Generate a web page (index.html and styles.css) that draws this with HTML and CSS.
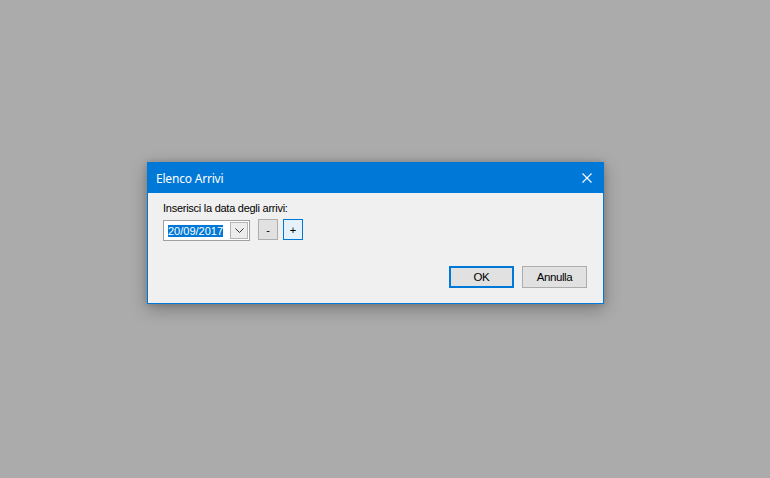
FILE: index.html
```html
<!DOCTYPE html>
<html lang="it">
<head>
  <meta charset="UTF-8" />
  <title>Elenco Arrivi</title>
  <link rel="stylesheet" href="styles.css">
</head>
<body>
  <div class="dialog">
    <div class="titlebar">
      <span class="title">Elenco Arrivi</span>
      <button class="close" type="button">
        <svg width="10" height="10" viewBox="0 0 10 10"><path d="M0.5 0.5 L9.5 9.5 M9.5 0.5 L0.5 9.5" stroke="#fff" stroke-width="1.1"/></svg>
      </button>
    </div>
    <div class="content">
      <label class="prompt">Inserisci la data degli arrivi:</label>
      <div class="date-row">
        <div class="date-picker">
          <span class="date-value">20/09/2017</span>
          <span class="drop">
            <svg width="9" height="5" viewBox="0 0 9 5"><path d="M0.5 0.5 L4.5 4.5 L8.5 0.5" stroke="#333" stroke-width="1" fill="none"/></svg>
          </span>
        </div>
        <button class="btn small" type="button">-</button>
        <button class="btn small hover" type="button">+</button>
      </div>
      <div class="footer">
        <button class="btn wide default" type="button">OK</button>
        <button class="btn wide" type="button">Annulla</button>
      </div>
    </div>
  </div>
</body>
</html>
```

FILE: styles.css
```css
body {
  margin: 0;
  background: #ababab;
  height: 478px;
  padding: 162px 0 0 147px;
  box-sizing: border-box;
  font-family: 'Liberation Sans', Arial, sans-serif;
}

.dialog {
  width: 457px;
  height: 142px;
  box-sizing: border-box;
  border: 1px solid #0078d7;
  background: #f0f0f0;
  display: flex;
  flex-direction: column;
  box-shadow: 0 5px 16px rgba(0, 0, 0, 0.28), 0 0 6px rgba(0, 0, 0, 0.15);
}

.titlebar {
  height: 30px;
  background: #0078d7;
  display: flex;
  align-items: center;
  justify-content: space-between;
  color: #fff;
}

.title {
  font-family: 'Noto Sans', 'Open Sans', sans-serif;
  font-size: 12px;
  letter-spacing: -0.2px;
  padding-left: 8px;
  padding-top: 1px;
}

.close {
  width: 30px;
  height: 30px;
  margin-right: 1px;
  background: none;
  border: none;
  padding: 0;
  display: flex;
  align-items: center;
  justify-content: center;
}

.content {
  flex: 1;
  display: flex;
  flex-direction: column;
  padding: 9px 16px 15px 15px;
}

.prompt {
  font-size: 11px;
  line-height: 13px;
  letter-spacing: -0.26px;
  color: #000;
  margin-bottom: 4px;
}

.date-row {
  display: flex;
  align-items: flex-start;
}

.date-picker {
  width: 87px;
  height: 21px;
  box-sizing: border-box;
  border: 1px solid #a0a0a0;
  background: #fff;
  display: flex;
  align-items: center;
  justify-content: space-between;
  margin-top: 1px;
  margin-right: 8px;
}

.date-value {
  font-size: 11px;
  line-height: 12px;
  background: #0078d7;
  color: #fff;
  margin-left: 4px;
}

.drop {
  width: 18px;
  height: 17px;
  box-sizing: border-box;
  border: 1px solid #b4b4b4;
  background: #ececec;
  margin-right: 1px;
  display: flex;
  align-items: center;
  justify-content: center;
}

.btn {
  font-family: 'Liberation Sans', Arial, sans-serif;
  font-size: 11px;
  color: #000;
  background: #e1e1e1;
  border: 1px solid #adadad;
  box-sizing: border-box;
  padding: 0;
  height: 21px;
}

.small {
  width: 20px;
  margin-right: 5px;
}

.small.hover {
  background: #e5f1fb;
  border-color: #0078d7;
}

.footer {
  margin-top: auto;
  display: flex;
  justify-content: flex-end;
  gap: 8px;
}

.wide {
  width: 65px;
  height: 22px;
  font-size: 11.5px;
  letter-spacing: -0.4px;
}

.wide.default {
  border: 2px solid #0078d7;
}
```
